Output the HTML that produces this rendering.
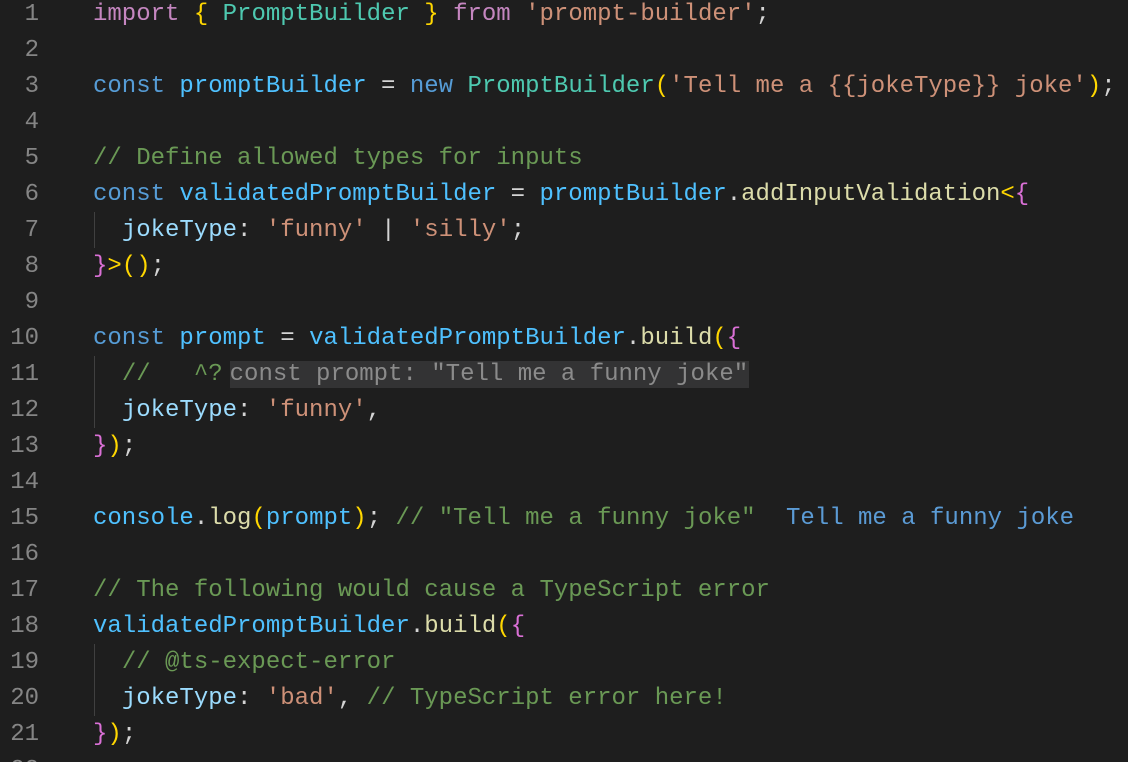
<!DOCTYPE html>
<html><head><style>
html,body{margin:0;padding:0;background:#1e1e1e;width:1128px;height:762px;overflow:hidden}
#w{position:relative;width:1128px;height:762px;overflow:hidden;background:#1e1e1e}
.l{position:absolute;left:0;height:36px;line-height:36px;font-family:"Liberation Mono",monospace;font-size:24px;white-space:pre;color:#d4d4d4}
.n{position:absolute;left:0;width:39px;text-align:right;color:#858585}
.c{position:absolute;left:93px}
.k{color:#569cd6}.m{color:#c586c0}.t{color:#4ec9b0}.s{color:#ce9178}.g{color:#6a9955}
.v{color:#4fc1ff}.p{color:#9cdcfe}.f{color:#dcdcaa}.y{color:#ffd700}.pk{color:#da70d6}
.guide{position:absolute;left:94px;width:1px;background:#404040}
.hint{background:#333334;color:#8b8b8b;margin-left:7px;padding-right:1px}
.ih{color:#5b9bd5}
</style></head><body><div id="w">
<div class="guide" style="top:212px;height:36px"></div>
<div class="guide" style="top:356px;height:72px"></div>
<div class="guide" style="top:644px;height:72px"></div>
<div class="l" style="top:-3px"><span class="n">1</span><span class="c"><span class="m">import</span> <span class="y">{</span> <span class="t">PromptBuilder</span> <span class="y">}</span> <span class="m">from</span> <span class="s">'prompt-builder'</span>;</span></div>
<div class="l" style="top:33px"><span class="n">2</span></div>
<div class="l" style="top:69px"><span class="n">3</span><span class="c"><span class="k">const</span> <span class="v">promptBuilder</span> = <span class="k">new</span> <span class="t">PromptBuilder</span><span class="y">(</span><span class="s">'Tell me a {{jokeType}} joke'</span><span class="y">)</span>;</span></div>
<div class="l" style="top:105px"><span class="n">4</span></div>
<div class="l" style="top:141px"><span class="n">5</span><span class="c g">// Define allowed types for inputs</span></div>
<div class="l" style="top:177px"><span class="n">6</span><span class="c"><span class="k">const</span> <span class="v">validatedPromptBuilder</span> = <span class="v">promptBuilder</span>.<span class="f">addInputValidation</span><span class="y">&lt;</span><span class="pk">{</span></span></div>
<div class="l" style="top:213px"><span class="n">7</span><span class="c">  <span class="p">jokeType</span>: <span class="s">'funny'</span> | <span class="s">'silly'</span>;</span></div>
<div class="l" style="top:249px"><span class="n">8</span><span class="c"><span class="pk">}</span><span class="y">&gt;()</span>;</span></div>
<div class="l" style="top:285px"><span class="n">9</span></div>
<div class="l" style="top:321px"><span class="n">10</span><span class="c"><span class="k">const</span> <span class="v">prompt</span> = <span class="v">validatedPromptBuilder</span>.<span class="f">build</span><span class="y">(</span><span class="pk">{</span></span></div>
<div class="l" style="top:357px"><span class="n">11</span><span class="c">  <span class="g">//   ^?</span><span class="hint">const prompt: "Tell me a funny joke"</span></span></div>
<div class="l" style="top:393px"><span class="n">12</span><span class="c">  <span class="p">jokeType</span>: <span class="s">'funny'</span>,</span></div>
<div class="l" style="top:429px"><span class="n">13</span><span class="c"><span class="pk">}</span><span class="y">)</span>;</span></div>
<div class="l" style="top:465px"><span class="n">14</span></div>
<div class="l" style="top:501px"><span class="n">15</span><span class="c"><span class="v">console</span>.<span class="f">log</span><span class="y">(</span><span class="v">prompt</span><span class="y">)</span>; <span class="g">// "Tell me a funny joke"</span></span><span class="ih" style="position:absolute;left:786px">Tell me a funny joke</span></div>
<div class="l" style="top:537px"><span class="n">16</span></div>
<div class="l" style="top:573px"><span class="n">17</span><span class="c g">// The following would cause a TypeScript error</span></div>
<div class="l" style="top:609px"><span class="n">18</span><span class="c"><span class="v">validatedPromptBuilder</span>.<span class="f">build</span><span class="y">(</span><span class="pk">{</span></span></div>
<div class="l" style="top:645px"><span class="n">19</span><span class="c">  <span class="g">// @ts-expect-error</span></span></div>
<div class="l" style="top:681px"><span class="n">20</span><span class="c">  <span class="p">jokeType</span>: <span class="s">'bad'</span>, <span class="g">// TypeScript error here!</span></span></div>
<div class="l" style="top:717px"><span class="n">21</span><span class="c"><span class="pk">}</span><span class="y">)</span>;</span></div>
<div class="l" style="top:753px"><span class="n">22</span></div>
</div></body></html>
